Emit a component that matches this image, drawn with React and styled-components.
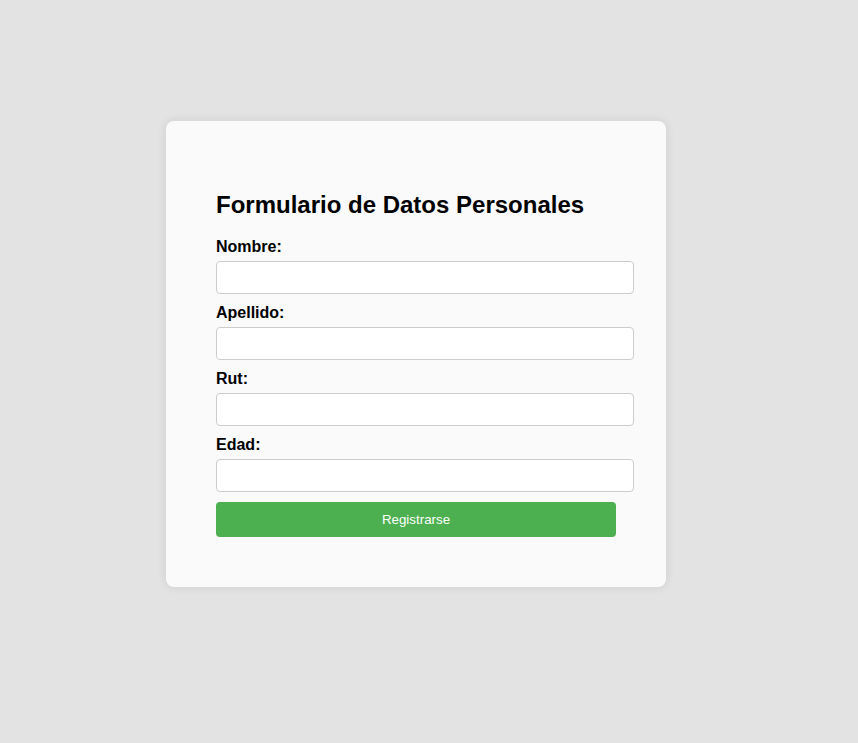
import React from "react";
import styled, { createGlobalStyle } from "styled-components";

const GlobalStyle = createGlobalStyle`
  html, body {
    margin: 0;
    padding: 0;
    background-color: #e3e3e3;
    font-family: "Liberation Sans", Arial, sans-serif;
  }
`;

const fields = ["Nombre", "Apellido", "Rut", "Edad"];

export default function App() {
  return (
    <>
      <GlobalStyle />
      <Page>
        <Card>
          <Title>Formulario de Datos Personales</Title>
          <Form onSubmit={(e) => e.preventDefault()}>
            {fields.map((name) => (
              <Field key={name}>
                <Label htmlFor={name.toLowerCase()}>{name}:</Label>
                <Input id={name.toLowerCase()} type="text" />
              </Field>
            ))}
            <SubmitButton type="submit">Registrarse</SubmitButton>
          </Form>
        </Card>
      </Page>
    </>
  );
}

const Page = styled.div`
  min-height: 743px;
  box-sizing: border-box;
  display: flex;
  align-items: flex-start;
  padding: 121px 0 0 166px;
`;
const Card = styled.div`
  width: 400px;
  padding: 50px;
  background-color: #fafafa;
  border-radius: 8px;
  box-shadow: 0 0 10px rgba(0, 0, 0, 0.1);
`;
const Title = styled.h2`
  font-size: 24px;
  font-weight: 700;
  color: #000000;
  line-height: 28px;
  margin: 20px 0 19px 0;
`;
const Form = styled.form`
  display: flex;
  flex-direction: column;
`;
const Field = styled.div`
  display: flex;
  flex-direction: column;
  margin-bottom: 10px;
`;
const Label = styled.label`
  font-size: 16px;
  font-weight: 700;
  color: #000000;
  line-height: 18px;
  margin-bottom: 5px;
`;
const Input = styled.input`
  box-sizing: border-box;
  width: 418px;
  height: 33px;
  padding: 8px;
  font-size: 14px;
  font-family: "Liberation Sans", Arial, sans-serif;
  border: 1px solid #cccccc;
  border-radius: 4px;
  background-color: #ffffff;
`;
const SubmitButton = styled.button`
  width: 400px;
  height: 35px;
  border: none;
  border-radius: 4px;
  background-color: #4caf50;
  color: #ffffff;
  font-size: 13.333px;
  font-family: "Liberation Sans", Arial, sans-serif;
  cursor: pointer;
`;
